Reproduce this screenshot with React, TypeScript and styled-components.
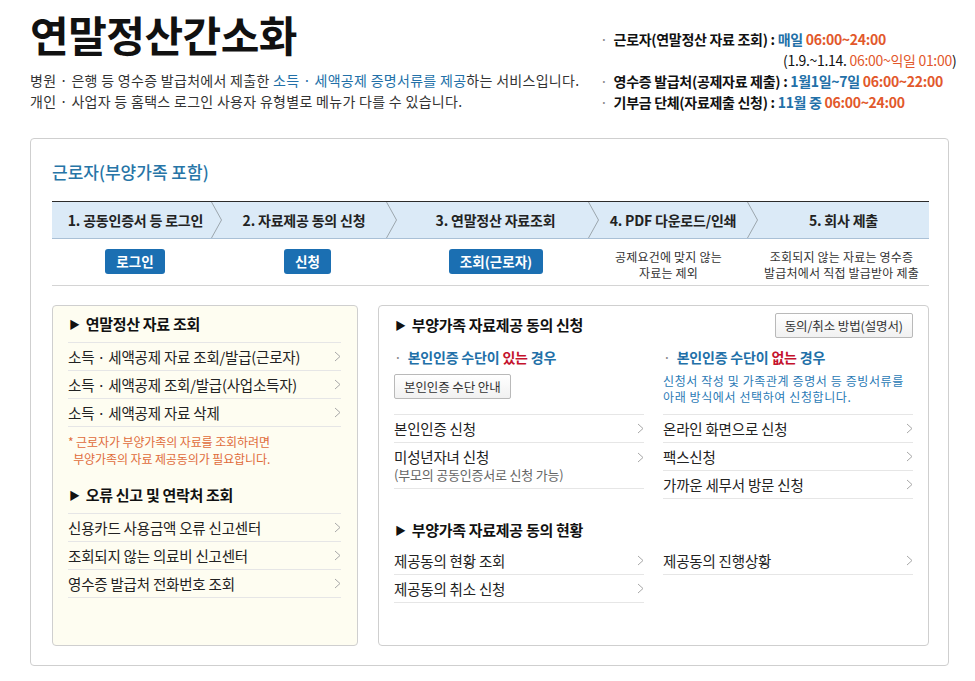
import React from 'react';
import styled, { createGlobalStyle } from 'styled-components';

const GlobalStyle = createGlobalStyle`
  body {
    margin: 0;
    background: #fff;
    font-family: "Noto Sans CJK KR", "Noto Sans", sans-serif;
    color: #222;
  }
  * { box-sizing: border-box; }
`;

const colors = {
  blue: '#2270a8',
  orange: '#e2582b',
  red: '#c4122c',
  btn: '#1b6fb2',
  border: '#cfcfcf',
  rowLine: '#e6e6e6',
};

const stepColumns = '170px 175px 202px 159px 1fr';

const Chevron = () => (
  <svg width="7" height="11" viewBox="0 0 7 11">
    <polyline points="1,1 6,5.5 1,10" fill="none" stroke="#a8a8a8" strokeWidth="1" />
  </svg>
);

const StepArrow = () => (
  <StepArrowSvg viewBox="0 0 11 38" preserveAspectRatio="none">
    <polyline points="0.5,0 10.5,19 0.5,38" fill="none" stroke="#9aa3ab" strokeWidth="1" />
  </StepArrowSvg>
);

const App = () => {
  return (
    <Page>
      <GlobalStyle />
      <Header>
        <Intro>
          <Title>연말정산간소화</Title>
          <Desc>
            병원 · 은행 등 영수증 발급처에서 제출한 <Blue>소득 · 세액공제 증명서류를 제공</Blue>하는 서비스입니다.
            <br />
            개인 · 사업자 등 홈택스 로그인 사용자 유형별로 메뉴가 다를 수 있습니다.
          </Desc>
        </Intro>
        <Schedule>
          <SchedLine>
            <Dot>·</Dot>근로자(연말정산 자료 조회) : <Blue>매일</Blue> <Orange>06:00~24:00</Orange>
          </SchedLine>
          <SchedLine $indent $plain>
            (1.9.~1.14. <Orange>06:00~익일 01:00</Orange>)
          </SchedLine>
          <SchedLine>
            <Dot>·</Dot>영수증 발급처(공제자료 제출) : <Blue>1월1일~7일</Blue> <Orange>06:00~22:00</Orange>
          </SchedLine>
          <SchedLine>
            <Dot>·</Dot>기부금 단체(자료제출 신청) : <Blue>11월 중</Blue> <Orange>06:00~24:00</Orange>
          </SchedLine>
        </Schedule>
      </Header>

      <Card>
        <CardTitle>근로자(부양가족 포함)</CardTitle>

        <Steps>
          <Step>
            <StepLabel $offset={8}>1. 공동인증서 등 로그인</StepLabel>
            <StepArrow />
          </Step>
          <Step>
            <StepLabel>2. 자료제공 동의 신청</StepLabel>
            <StepArrow />
          </Step>
          <Step>
            <StepLabel $offset={6}>3. 연말정산 자료조회</StepLabel>
            <StepArrow />
          </Step>
          <Step>
            <StepLabel>4. PDF 다운로드/인쇄</StepLabel>
            <StepArrow />
          </Step>
          <Step>
            <StepLabel>5. 회사 제출</StepLabel>
          </Step>
        </Steps>

        <StepActions>
          <ActionCell><BlueButton>로그인</BlueButton></ActionCell>
          <ActionCell><BlueButton>신청</BlueButton></ActionCell>
          <ActionCell><BlueButton>조회(근로자)</BlueButton></ActionCell>
          <ActionCell $pad={20}>
            <StepNote>공제요건에 맞지 않는<br />자료는 제외</StepNote>
          </ActionCell>
          <ActionCell>
            <StepNote>조회되지 않는 자료는 영수증<br />발급처에서 직접 발급받아 제출</StepNote>
          </ActionCell>
        </StepActions>

        <Panels>
          <Panel $cream>
            <SectionHead>연말정산 자료 조회</SectionHead>
            <List $top>
              <Row><span>소득 · 세액공제 자료 조회/발급(근로자)</span><Chevron /></Row>
              <Row><span>소득 · 세액공제 조회/발급(사업소득자)</span><Chevron /></Row>
              <Row><span>소득 · 세액공제 자료 삭제</span><Chevron /></Row>
            </List>
            <Note>
              * 근로자가 부양가족의 자료를 조회하려면<br />
              &nbsp;&nbsp;부양가족의 자료 제공동의가 필요합니다.
            </Note>
            <SectionHead $gap={17}>오류 신고 및 연락처 조회</SectionHead>
            <List $top>
              <Row><span>신용카드 사용금액 오류 신고센터</span><Chevron /></Row>
              <Row><span>조회되지 않는 의료비 신고센터</span><Chevron /></Row>
              <Row><span>영수증 발급처 전화번호 조회</span><Chevron /></Row>
            </List>
          </Panel>

          <Panel>
            <PanelTop>
              <SectionHead>부양가족 자료제공 동의 신청</SectionHead>
              <GrayButton>동의/취소 방법(설명서)</GrayButton>
            </PanelTop>
            <Columns>
              <Column>
                <SubHead><Dot>·</Dot>본인인증 수단이 <Red>있는</Red> 경우</SubHead>
                <Middle>
                  <GrayButton>본인인증 수단 안내</GrayButton>
                </Middle>
                <List $top>
                  <Row><span>본인인증 신청</span><Chevron /></Row>
                  <Row $tall>
                    <span>
                      미성년자녀 신청
                      <SubText>(부모의 공동인증서로 신청 가능)</SubText>
                    </span>
                    <Chevron />
                  </Row>
                </List>
              </Column>
              <Column>
                <SubHead><Dot>·</Dot>본인인증 수단이 <Red>없는</Red> 경우</SubHead>
                <Middle>
                  <BlueDesc>
                    신청서 작성 및 가족관계 증명서 등 증빙서류를<br />
                    아래 방식에서 선택하여 신청합니다.
                  </BlueDesc>
                </Middle>
                <List $top>
                  <Row><span>온라인 화면으로 신청</span><Chevron /></Row>
                  <Row><span>팩스신청</span><Chevron /></Row>
                  <Row><span>가까운 세무서 방문 신청</span><Chevron /></Row>
                </List>
              </Column>
            </Columns>

            <SectionHead $gap={20}>부양가족 자료제공 동의 현황</SectionHead>
            <StatusGrid>
              <Row><span>제공동의 현황 조회</span><Chevron /></Row>
              <Row><span>제공동의 진행상황</span><Chevron /></Row>
              <Row><span>제공동의 취소 신청</span><Chevron /></Row>
            </StatusGrid>
          </Panel>
        </Panels>
      </Card>
    </Page>
  );
};

export default App;

const Page = styled.div`
  width: 975px;
  padding-top: 10px;
`;

const Header = styled.header`
  display: flex;
  padding-left: 30px;
`;

const Intro = styled.div`
  width: 570px;
`;

const Title = styled.h1`
  margin: 0;
  font-size: 42px;
  line-height: 48px;
  font-weight: 700;
  letter-spacing: -0.5px;
  color: #111;
`;

const Desc = styled.p`
  margin: 12px 0 0;
  font-size: 14px;
  line-height: 21px;
  color: #333;
  letter-spacing: 0.3px;
  white-space: nowrap;
`;

const Blue = styled.span`
  color: ${colors.blue};
`;

const Orange = styled.span`
  color: ${colors.orange};
`;

const Red = styled.span`
  color: ${colors.red};
`;

const Dot = styled.span`
  color: #888;
  margin-right: 6px;
  font-weight: 400;
`;

const Schedule = styled.div`
  padding-top: 19px;
`;

const SchedLine = styled.div<{ $indent?: boolean; $plain?: boolean }>`
  font-size: 14px;
  line-height: 21px;
  font-weight: ${({ $plain }) => ($plain ? 400 : 700)};
  letter-spacing: -0.3px;
  color: #111;
  padding-left: ${({ $indent }) => ($indent ? '183px' : '0')};
  white-space: nowrap;
`;

const Card = styled.section`
  margin: 25px 26px 16px 30px;
  border: 1px solid ${colors.border};
  border-radius: 4px;
  padding: 22px 19px 19px 21px;
`;

const CardTitle = styled.h2`
  margin: 0 0 18px;
  font-size: 17px;
  line-height: 22px;
  font-weight: 500;
  color: #2775a7;
`;

const Steps = styled.div`
  display: grid;
  grid-template-columns: ${stepColumns};
  height: 38px;
  background: #dbeaf7;
  border-top: 1px solid #2b2b2b;
  border-bottom: 1px solid #a9c0d6;
`;

const Step = styled.div`
  display: flex;
  align-items: stretch;
`;

const StepLabel = styled.div<{ $offset?: number }>`
  flex: 1;
  display: flex;
  align-items: center;
  justify-content: center;
  padding-left: ${({ $offset }) => $offset ?? 0}px;
  font-size: 14px;
  font-weight: 700;
  letter-spacing: -0.2px;
  color: #222;
  white-space: nowrap;
`;

const StepArrowSvg = styled.svg`
  width: 11px;
  height: 36px;
  flex: none;
`;

const StepActions = styled.div`
  display: grid;
  grid-template-columns: ${stepColumns};
  height: 47px;
  padding-top: 10px;
  border-bottom: 1px solid #d4d4d4;
`;

const ActionCell = styled.div<{ $pad?: number }>`
  display: flex;
  justify-content: center;
  align-items: flex-start;
  padding-right: ${({ $pad }) => $pad ?? 4}px;
`;

const BlueButton = styled.button`
  height: 25px;
  padding: 0 11px;
  border: none;
  border-radius: 3px;
  background: ${colors.btn};
  color: #fff;
  font-family: inherit;
  font-size: 13.5px;
  font-weight: 700;
  line-height: 25px;
`;

const StepNote = styled.div`
  font-size: 12px;
  line-height: 16px;
  text-align: center;
  color: #333;
  letter-spacing: 0.2px;
  white-space: nowrap;
`;

const Panels = styled.div`
  display: grid;
  grid-template-columns: 306px 1fr;
  gap: 20px;
  margin-top: 19px;
  height: 341px;
`;

const Panel = styled.div<{ $cream?: boolean }>`
  border: 1px solid ${colors.border};
  border-radius: 4px;
  background: ${({ $cream }) => ($cream ? '#fefdf1' : '#fff')};
  padding: ${({ $cream }) => ($cream ? '7px 16px 0 15px' : '7px 15px 0 15px')};
`;

const PanelTop = styled.div`
  display: flex;
  justify-content: space-between;
  align-items: center;
  height: 24px;
`;

const SectionHead = styled.h3<{ $gap?: number }>`
  margin: ${({ $gap }) => $gap ?? 0}px 0 0 1px;
  font-size: 15px;
  line-height: 22px;
  font-weight: 700;
  color: #111;
  letter-spacing: -0.3px;
  white-space: nowrap;
  &::before {
    content: '▶';
    font-size: 11px;
    margin-right: 6px;
    position: relative;
    top: -1px;
  }
`;

const List = styled.div<{ $top?: boolean }>`
  margin-top: 6px;
  border-top: ${({ $top }) => ($top ? `1px solid ${colors.rowLine}` : 'none')};
`;

const Row = styled.div<{ $tall?: boolean }>`
  display: flex;
  justify-content: space-between;
  align-items: ${({ $tall }) => ($tall ? 'flex-start' : 'center')};
  height: ${({ $tall }) => ($tall ? '46px' : '28px')};
  padding-top: ${({ $tall }) => ($tall ? '4px' : '0')};
  border-bottom: 1px solid ${colors.rowLine};
  font-size: 14.5px;
  line-height: 20px;
  color: #222;
  letter-spacing: -0.2px;
  white-space: nowrap;
  svg {
    flex: none;
    margin-top: ${({ $tall }) => ($tall ? '5px' : '0')};
  }
`;

const SubText = styled.div`
  font-size: 13px;
  line-height: 16px;
  color: #666;
`;

const Note = styled.p`
  margin: 6px 0 0;
  font-size: 12px;
  line-height: 17px;
  color: #e06b3a;
  letter-spacing: -0.1px;
`;

const GrayButton = styled.button`
  height: 25px;
  padding: 0 9px;
  border: 1px solid #b9b9b9;
  border-radius: 2px;
  background: linear-gradient(#ffffff, #f1f1f1);
  font-family: inherit;
  font-size: 12.5px;
  line-height: 23px;
  color: #333;
  letter-spacing: -0.1px;
`;

const Columns = styled.div`
  display: grid;
  grid-template-columns: 250px 250px;
  gap: 19px;
  margin-top: 9px;
`;

const Column = styled.div`
  display: flex;
  flex-direction: column;
`;

const SubHead = styled.div`
  font-size: 14px;
  line-height: 22px;
  font-weight: 700;
  color: ${colors.blue};
  letter-spacing: -0.2px;
`;

const Middle = styled.div`
  height: 40px;
  padding-top: 5px;
`;

const BlueDesc = styled.p`
  margin: 0;
  font-size: 12px;
  line-height: 16px;
  color: #2a7ab5;
  letter-spacing: 0.6px;
  white-space: nowrap;
`;

const StatusGrid = styled.div`
  display: grid;
  grid-template-columns: 250px 250px;
  column-gap: 19px;
  margin-top: 5px;
`;
